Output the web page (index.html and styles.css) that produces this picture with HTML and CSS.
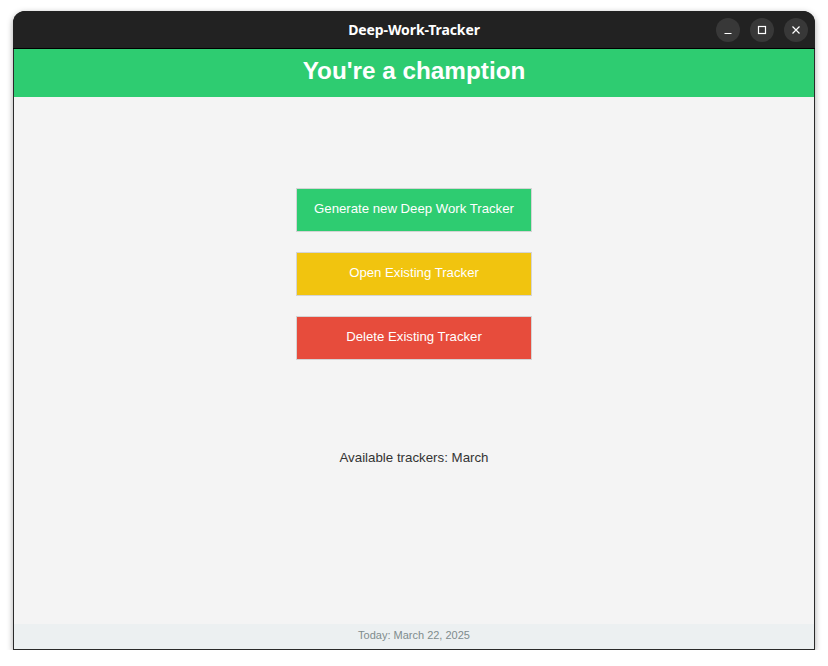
FILE: index.html
```html
<!DOCTYPE html>
<html>
<head>
<meta charset="utf-8">
<title>Deep-Work-Tracker</title>
<link rel="stylesheet" href="styles.css">
</head>
<body>
<div class="window">
  <div class="titlebar">
    <div class="title">Deep-Work-Tracker</div>
    <div class="controls">
      <div class="ctl">
        <svg width="10" height="10" viewBox="0 0 10 10"><line x1="1.5" y1="8.5" x2="8.5" y2="8.5" stroke="#fff" stroke-width="1.2"/></svg>
      </div>
      <div class="ctl">
        <svg width="10" height="10" viewBox="0 0 10 10"><rect x="1.5" y="1.5" width="7" height="7" fill="none" stroke="#fff" stroke-width="1.2"/></svg>
      </div>
      <div class="ctl">
        <svg width="10" height="10" viewBox="0 0 10 10"><path d="M1.5 1.5 L8.5 8.5 M8.5 1.5 L1.5 8.5" stroke="#fff" stroke-width="1.2"/></svg>
      </div>
    </div>
  </div>
  <div class="app">
    <header class="banner">You're a chamption</header>
    <main class="content">
      <div class="buttons">
        <button class="btn btn-green">Generate new Deep Work Tracker</button>
        <button class="btn btn-yellow">Open Existing Tracker</button>
        <button class="btn btn-red">Delete Existing Tracker</button>
      </div>
      <p class="available">Available trackers: March</p>
    </main>
    <footer class="footer">Today: March 22, 2025</footer>
  </div>
</div>
</body>
</html>
```
FILE: styles.css
```css
html, body {
  margin: 0;
  padding: 0;
  background: #ffffff;
}
body {
  padding: 11px 13px 0 13px;
  font-family: "Liberation Sans", Arial, sans-serif;
}
.window {
  width: 802px;
  height: 639px;
  border-radius: 12px 12px 0 0;
  overflow: hidden;
  display: flex;
  flex-direction: column;
  box-shadow: 0 2px 6px rgba(0,0,0,0.35);
  background: #222;
}
.titlebar {
  height: 37px;
  flex: none;
  background: #222222;
  border-bottom: 1px solid #000;
  position: relative;
  display: flex;
  align-items: center;
  justify-content: center;
}
.title {
  color: #ffffff;
  font-family: "Noto Sans", sans-serif;
  font-weight: 700;
  font-size: 14px;
  letter-spacing: -0.1px;
}
.controls {
  position: absolute;
  right: 7px;
  top: 7px;
  display: flex;
  gap: 10px;
}
.ctl {
  width: 24px;
  height: 24px;
  border-radius: 50%;
  background: #383838;
  display: flex;
  align-items: center;
  justify-content: center;
}
.app {
  flex: 1;
  display: flex;
  flex-direction: column;
  border: 1px solid #2a2a2a;
  border-top: none;
  background: #f4f4f4;
}
.banner {
  height: 48px;
  box-sizing: border-box;
  padding-bottom: 5px;
  flex: none;
  background: #2ecc71;
  color: #ffffff;
  font-weight: 700;
  font-size: 24.3px;
  display: flex;
  align-items: center;
  justify-content: center;
}
.content {
  flex: 1;
  display: flex;
  flex-direction: column;
  align-items: center;
  padding-top: 91px;
}
.buttons {
  display: flex;
  flex-direction: column;
  gap: 20px;
}
.btn {
  width: 236px;
  height: 44px;
  border: 1px solid #d4d4d4;
  color: #ffffff;
  font-family: "Liberation Sans", Arial, sans-serif;
  font-size: 13.2px;
  padding: 0 0 4px 0;
  margin: 0;
}
.btn-green { background: #2ecc71; }
.btn-yellow { background: #f1c40f; }
.btn-red { background: #e74c3c; }
.available {
  margin: 89px 0 0 0;
  font-size: 13.3px;
  line-height: 17px;
  color: #333333;
}
.footer {
  height: 25px;
  box-sizing: border-box;
  padding-bottom: 4px;
  flex: none;
  background: #ecf0f1;
  color: #7f8c8d;
  font-size: 11px;
  display: flex;
  align-items: center;
  justify-content: center;
}
```
